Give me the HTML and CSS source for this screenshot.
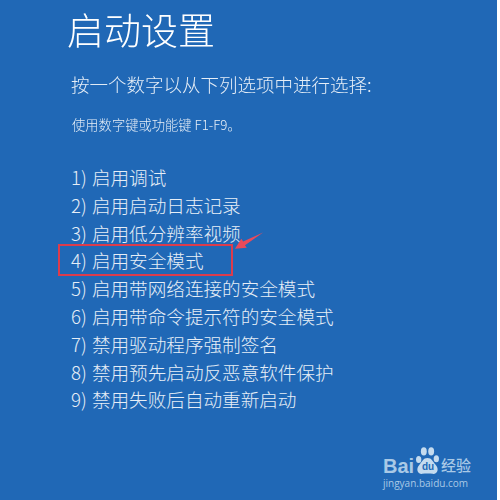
FILE: index.html
```html
<!DOCTYPE html>
<html lang="zh-CN">
<head>
<meta charset="utf-8">
<title>启动设置</title>
<link rel="stylesheet" href="styles.css">
</head>
<body>
<main class="screen">
  <h1 class="title">启动设置</h1>
  <p class="lead">按一个数字以从下列选项中进行选择:</p>
  <p class="hint">使用数字键或功能键 F1-F9。</p>
  <ol class="options">
    <li>1) 启用调试</li>
    <li>2) 启用启动日志记录</li>
    <li>3) 启用低分辨率视频</li>
    <li class="picked">4) 启用安全模式</li>
    <li>5) 启用带网络连接的安全模式</li>
    <li>6) 启用带命令提示符的安全模式</li>
    <li>7) 禁用驱动程序强制签名</li>
    <li>8) 禁用预先启动反恶意软件保护</li>
    <li>9) 禁用失败后自动重新启动</li>
  </ol>
  <svg class="arrow" viewBox="0 0 32 20" aria-hidden="true"><path d="M0 18 L7 7 L9 10 L31 0 L11 14 L13 17 Z"/></svg>
  <div class="mark">
    <div class="mark-top">
      <span class="bai">Bai</span>
      <span class="paw-wrap">
        <svg class="paw" viewBox="0 0 34 38" aria-hidden="true">
          <ellipse cx="5" cy="17" rx="3.600" ry="4.800"/>
          <ellipse cx="12" cy="6" rx="4" ry="5.600"/>
          <ellipse cx="22" cy="6" rx="4" ry="5.600"/>
          <ellipse cx="29" cy="16" rx="3.600" ry="4.800"/>
          <path d="M17 15 C23 15 24 20 28 24 C33 29 31 37 24 36.500 C20 36 14 36 10 36.500 C3 37 1 29 6 24 C10 20 11 15 17 15 Z"/>
        </svg>
        <span class="du">du</span>
      </span>
      <span class="jy">经验</span>
    </div>
    <div class="mark-url">jingyan.baidu.com</div>
  </div>
</main>
</body>
</html>
```
FILE: styles.css
```css
html, body { margin: 0; padding: 0; background: #fff; }
.screen {
  position: relative;
  box-sizing: border-box;
  width: 497px;
  height: 500px;
  padding: 5px 0 0 67px;
  background: #2068b6;
  color: #e6eef7;
  font-family: "Noto Sans CJK SC", "Noto Sans", sans-serif;
  overflow: hidden;
}
.title { margin: 0; font-size: 37px; line-height: 48px; font-weight: 300; color: #fff; filter: blur(.3px); }
.lead { margin: 18px 0 0 4px; font-size: 18.500px; line-height: 26px; font-weight: 300; filter: blur(.3px); }
.hint { margin: 18px 0 0 5px; font-size: 13.300px; line-height: 20px; font-weight: 300; filter: blur(.3px); }
.options { list-style: none; margin: 28px 0 0 4px; padding: 0; font-size: 18.600px; line-height: 27.800px; font-weight: 300; word-spacing: 1px; }
.options li { white-space: nowrap; }
.picked { position: relative; }
.picked::after {
  content: "";
  position: absolute;
  left: -13px;
  top: -2px;
  width: 171px;
  height: 28px;
  border: 2.500px solid #dc3c4c;
}
.arrow { position: absolute; left: 235px; top: 232px; width: 29px; height: 19px; fill: #ea4a5a; }
.mark { position: absolute; left: 383px; top: 447px; width: 92px; color: #a9c9e6; }
.mark-top { display: flex; align-items: flex-end; height: 28px; }
.bai { font: 700 20px/18px "Liberation Sans", sans-serif; width: 32px; }
.paw-wrap { position: relative; display: block; width: 25px; height: 28px; }
.paw { display: block; width: 25px; height: 28px; fill: #c4dbef; }
.du { position: absolute; left: 5px; top: 14px; width: 16px; text-align: center; font: 700 10px/12px "Liberation Sans", sans-serif; color: #2068b6; }
.jy { font-size: 15px; line-height: 20px; font-weight: 500; margin-left: 1px; white-space: nowrap; }
.mark-url { font: 400 10px/13px "Open Sans", sans-serif; white-space: nowrap; margin-top: 2px; }
```
